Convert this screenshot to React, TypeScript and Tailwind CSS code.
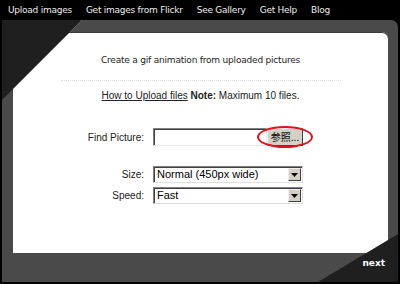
import React from 'react';

const navItems = ['Upload images', 'Get images from Flickr', 'See Gallery', 'Get Help', 'Blog'];

const SelectBox: React.FC<{ value: string }> = ({ value }) => (
  <div className="flex h-[17px] w-[150px] items-stretch border border-t-[#808080] border-l-[#808080] border-b-[#e0e0e0] border-r-[#e0e0e0] bg-white shadow-[inset_1px_1px_0_#404040]">
    <div className="flex flex-1 items-center pl-[3px] text-[11px] leading-none text-black">{value}</div>
    <div className="m-[1px] flex w-[13px] items-center justify-center border border-t-[#f0f0f0] border-l-[#f0f0f0] border-b-[#404040] border-r-[#404040] bg-[#d4d0c8]">
      <svg width="7" height="4" viewBox="0 0 7 4">
        <polygon points="0,0 7,0 3.5,4" fill="#000" />
      </svg>
    </div>
  </div>
);

const App: React.FC = () => {
  return (
    <div className="flex h-[284px] w-[400px] flex-col overflow-hidden bg-black font-['Liberation_Sans',Arial,sans-serif]">
      {/* top navigation */}
      <div className="flex h-[20px] items-center gap-[14px] pl-[8px] pt-[1px] font-['DejaVu_Sans',Verdana,sans-serif] text-[9px] tracking-[-0.25px] text-[#ececec]">
        {navItems.map((item) => (
          <span key={item}>{item}</span>
        ))}
      </div>

      {/* main panel */}
      <div className="relative mx-[2px] h-[262px] overflow-hidden rounded-tr-[7px] bg-[#4a4a4a] pl-[11px] pr-[10px] pt-[12px]">
        <div className="flex h-[221px] flex-col items-center rounded-tr-[6px] bg-white pt-[22px] shadow-[inset_0_1px_0_#3a3a3a]">
          <p className="font-['DejaVu_Sans',Verdana,sans-serif] text-[9px] leading-[12px] text-[#222] tracking-[-0.2px]">
            Create a gif animation from uploaded pictures
          </p>
          <div className="mt-[14px] w-[280px] border-t border-dotted border-[#dcdcdc]" />
          <p className="mt-[9px] text-[10px] leading-[12px] text-[#222]">
            <span className="underline">How to Upload files</span> <b>Note:</b> Maximum 10 files.
          </p>

          {/* form */}
          <div className="mt-[26px] flex w-full flex-col text-[10px] text-[#222]">
            <div className="flex items-center">
              <span className="w-[131px] text-right">Find Picture:</span>
              <div className="ml-[9px] flex h-[18px] items-stretch">
                <div className="w-[114px] border border-t-[#808080] border-l-[#808080] border-b-[#e8e8e8] border-r-[#e8e8e8] bg-white shadow-[inset_1px_1px_0_#404040]" />
                <div className="relative flex w-[36px] items-center justify-center border border-t-[#f8f8f8] border-l-[#f8f8f8] border-b-[#404040] border-r-[#404040] bg-[#d4d0c8] font-['Noto_Sans_CJK_JP',sans-serif] text-[10px] leading-none text-black">
                  参照...
                  <div className="absolute left-[-11px] top-[-3px] h-[22px] w-[56px] rounded-[50%] border-2 border-[#e0141e]" />
                </div>
              </div>
            </div>

            <div className="mt-[20px] flex items-center">
              <span className="w-[131px] text-right">Size:</span>
              <div className="ml-[9px]">
                <SelectBox value="Normal (450px wide)" />
              </div>
            </div>
            <div className="mt-[4px] flex items-center">
              <span className="w-[131px] text-right">Speed:</span>
              <div className="ml-[9px]">
                <SelectBox value="Fast" />
              </div>
            </div>
          </div>
        </div>

        {/* corner decorations */}
        <svg className="absolute left-0 top-0" width="82" height="82" viewBox="0 0 82 82">
          <polygon points="0,0 80,0 0,80" fill="#1f1f1f" />
          <line x1="80" y1="0" x2="68" y2="12" stroke="#5e5e5e" strokeWidth="1" />
        </svg>
        <svg className="absolute bottom-0 right-0" width="80" height="48" viewBox="0 0 80 48">
          <polygon points="0,48 80,0 80,48" fill="#1f1f1f" />
        </svg>
        <span className="absolute bottom-[12px] right-[13px] font-['DejaVu_Sans',Verdana,sans-serif] text-[9px] font-bold text-white">
          next
        </span>
      </div>
    </div>
  );
};

export default App;
